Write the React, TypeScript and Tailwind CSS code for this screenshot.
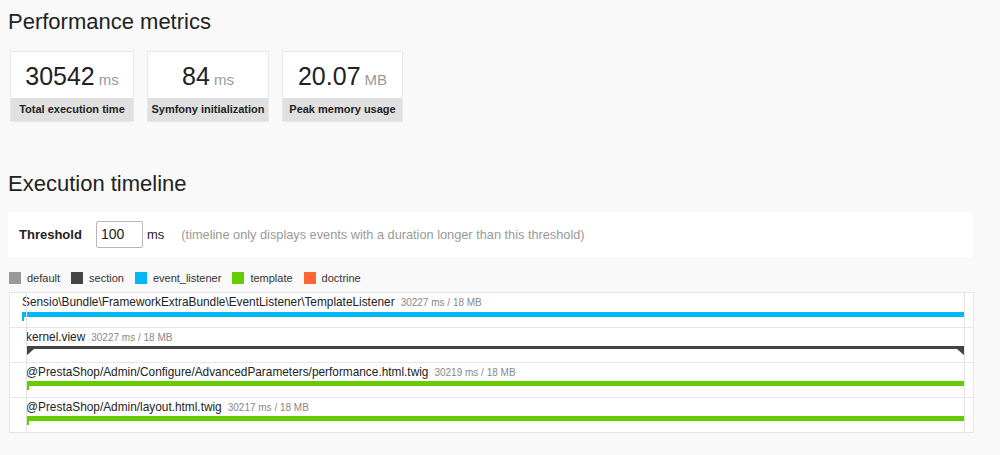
import React from 'react';

interface Metric {
  value: string;
  unit: string;
  label: string;
  width: string;
}

const metrics: Metric[] = [
  { value: '30542', unit: 'ms', label: 'Total execution time', width: 'w-[124px]' },
  { value: '84', unit: 'ms', label: 'Symfony initialization', width: 'w-[122px]' },
  { value: '20.07', unit: 'MB', label: 'Peak memory usage', width: 'w-[121px]' },
];

const legend = [
  { name: 'default', color: 'bg-[#999999]' },
  { name: 'section', color: 'bg-[#444444]' },
  { name: 'event_listener', color: 'bg-[#00b8f5]' },
  { name: 'template', color: 'bg-[#66cc00]' },
  { name: 'doctrine', color: 'bg-[#ff6633]' },
];

function MetricBox({ metric }: { metric: Metric }) {
  return (
    <div className={`${metric.width} border border-[#e8e8e8] bg-white`}>
      <div className="flex h-[46px] items-baseline justify-center pt-[12px]">
        <span className="text-[25px] leading-[25px] text-[#222]">{metric.value}</span>
        <span className="ml-[4px] text-[15px] leading-[15px] text-[#999]">{metric.unit}</span>
      </div>
      <div className="flex h-[23px] items-center justify-center bg-[#e0e0e0] text-[11px] font-bold text-[#222]">
        {metric.label}
      </div>
    </div>
  );
}

function RowLabel({ name, meta, className }: { name: string; meta: string; className: string }) {
  return (
    <div className={`flex items-baseline pt-[2px] leading-[14px] ${className}`}>
      <span className="text-[11.85px] text-[#222]">{name}</span>
      <span className="ml-[6px] text-[10px] text-[#888]">{meta}</span>
    </div>
  );
}

export default function App() {
  return (
    <div className="min-h-[455px] bg-[#f9f9f9] pl-[8px] pt-[11px] font-['Liberation_Sans',Arial,sans-serif] text-[#222]">
      <h2 className="text-[22px] leading-[22px] font-normal">Performance metrics</h2>

      {/* Metrics */}
      <div className="mt-[18px] ml-[2px] flex gap-[13px]">
        {metrics.map((m) => (
          <MetricBox key={m.label} metric={m} />
        ))}
      </div>

      <h2 className="mt-[51px] text-[22px] leading-[22px] font-normal">Execution timeline</h2>

      {/* Threshold */}
      <div className="mt-[17px] flex h-[45px] w-[965px] items-center bg-white pl-[11px]">
        <span className="w-[77px] text-[13px] font-bold text-[#222]">Threshold</span>
        <div className="flex h-[27px] w-[47px] items-center rounded-[2px] border border-[#b8b8b8] pl-[4px] text-[14px] text-[#222]">
          100
        </div>
        <span className="ml-[4px] text-[13px] text-[#222]">ms</span>
        <span className="ml-[17px] text-[12.75px] text-[#999]">
          (timeline only displays events with a duration longer than this threshold)
        </span>
      </div>

      {/* Legend */}
      <div className="mt-[15px] ml-[1px] flex h-[12px] items-center gap-[11px]">
        {legend.map((l) => (
          <div key={l.name} className="flex items-center">
            <span className={`h-[12px] w-[12px] ${l.color}`} />
            <span className="ml-[6px] text-[11px] leading-[12px] text-[#333]">{l.name}</span>
          </div>
        ))}
      </div>

      {/* Timeline */}
      <div className="relative mt-[8px] ml-[1px] w-[965px] border border-[#e6e6e6] bg-white">
        <div className="h-[35px] border-b border-[#e6e6e6]">
          <RowLabel
            className="pl-[12px]"
            name="Sensio\Bundle\FrameworkExtraBundle\EventListener\TemplateListener"
            meta="30227 ms / 18 MB"
          />
          <div className="relative mt-[2px] ml-[12px] mr-[8px] h-[5px] bg-[#00b8f5]">
            <span className="absolute left-0 top-0 h-[9px] w-[2px] bg-[#00b8f5]" />
          </div>
        </div>

        <div className="h-[35px] border-b border-[#e6e6e6]">
          <RowLabel className="pl-[16px]" name="kernel.view" meta="30227 ms / 18 MB" />
          <div className="relative mt-[1px] ml-[16px] mr-[8px] h-[3px] bg-[#444]">
            <svg className="absolute left-0 top-full" width="8" height="7" viewBox="0 0 8 7">
              <polygon points="0,0 8,0 0,7" fill="#444" />
            </svg>
            <svg className="absolute right-0 top-full" width="8" height="7" viewBox="0 0 8 7">
              <polygon points="0,0 8,0 8,7" fill="#444" />
            </svg>
          </div>
        </div>

        <div className="h-[35px] border-b border-[#e6e6e6]">
          <RowLabel
            className="pl-[16px]"
            name="@PrestaShop/Admin/Configure/AdvancedParameters/performance.html.twig"
            meta="30219 ms / 18 MB"
          />
          <div className="relative mt-[1px] ml-[16px] mr-[8px] h-[5px] bg-[#66cc00]">
            <span className="absolute left-[1px] top-0 h-[9px] w-[2px] bg-[#66cc00]" />
          </div>
        </div>

        <div className="h-[34px]">
          <RowLabel className="pl-[16px]" name="@PrestaShop/Admin/layout.html.twig" meta="30217 ms / 18 MB" />
          <div className="relative mt-[1px] ml-[16px] mr-[8px] h-[5px] bg-[#66cc00]">
            <span className="absolute left-[1px] top-0 h-[9px] w-[2px] bg-[#66cc00]" />
          </div>
        </div>

        {/* start / end markers */}
        <span className="absolute bottom-0 left-[16px] top-0 w-px bg-[#e2e2e2]" />
        <span className="absolute bottom-0 right-[8px] top-0 w-px bg-[#e2e2e2]" />
      </div>
    </div>
  );
}
